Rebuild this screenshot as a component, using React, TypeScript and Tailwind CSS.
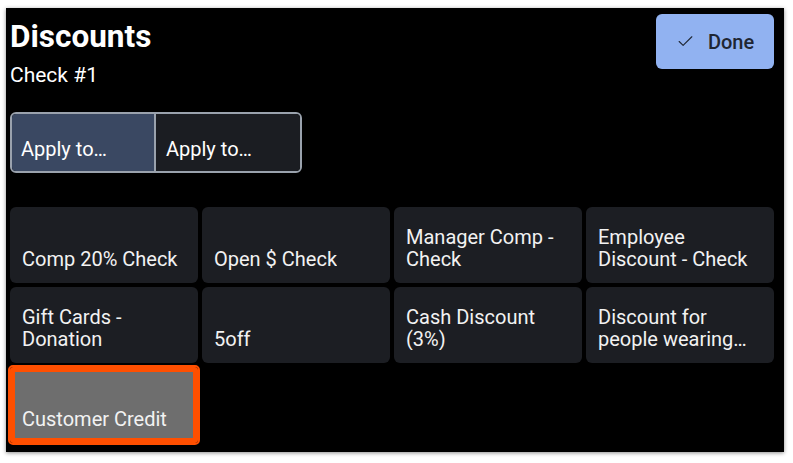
import { Check } from 'lucide-react';

const discounts = [
  'Comp 20% Check',
  'Open $ Check',
  'Manager Comp - Check',
  'Employee Discount - Check',
  'Gift Cards - Donation',
  '5off',
  'Cash Discount (3%)',
  'Discount for people wearing…',
];

const App = () => {
  return (
    <div className="min-h-screen w-full bg-white pl-[6px] pt-[8px] font-['Roboto',sans-serif]">
      <div className="flex h-[444px] w-[778px] flex-col bg-black pl-[4px] pr-[10px] shadow-[0_1px_4px_rgba(0,0,0,0.45)]">
        {/* Header */}
        <div className="flex items-start justify-between">
          <div className="pt-[11px] text-white">
            <h1 className="text-[31.5px] font-bold leading-[36px]">Discounts</h1>
            <p className="mt-[8px] text-[21px] leading-[24px]">Check #1</p>
          </div>
          <button className="mt-[6px] flex h-[55px] w-[118px] items-center justify-center gap-[13px] rounded-[6px] bg-[#91b2f1] text-[20px] font-medium text-[#1f2633]">
            <Check size={19} strokeWidth={1.4} />
            Done
          </button>
        </div>

        {/* Apply to toggle */}
        <div className="mt-[25px] flex h-[61px] w-[292px] overflow-hidden rounded-[6px] border-2 border-[#9aa2ad] text-[20px] leading-[22px] text-white">
          <div className="flex w-[144px] items-end border-r-2 border-[#9aa2ad] bg-[#3a4862] pb-[11px] pl-[9px]">
            Apply to…
          </div>
          <div className="flex flex-1 items-end bg-[#1b1d22] pb-[11px] pl-[10px]">Apply to…</div>
        </div>

        {/* Discount tiles */}
        <div className="mt-[34px] grid grid-cols-4 gap-[4px]">
          {discounts.map((name) => (
            <button
              key={name}
              className="flex h-[76px] items-end rounded-[6px] bg-[#1c1e23] px-[12px] pb-[13px] text-left text-[20px] leading-[22px] text-[#f2f2f2]"
            >
              <span className="line-clamp-2">{name}</span>
            </button>
          ))}
          <button className="flex h-[76px] items-end rounded-[3px] border-[5px] border-[#ff4f00] bg-[#6e6e6e] px-[7px] pb-[8px] text-left text-[20px] leading-[22px] text-[#f2f2f2] outline-2 outline-[#ff4f00]">
            Customer Credit
          </button>
        </div>
      </div>
    </div>
  );
};

export default App;
